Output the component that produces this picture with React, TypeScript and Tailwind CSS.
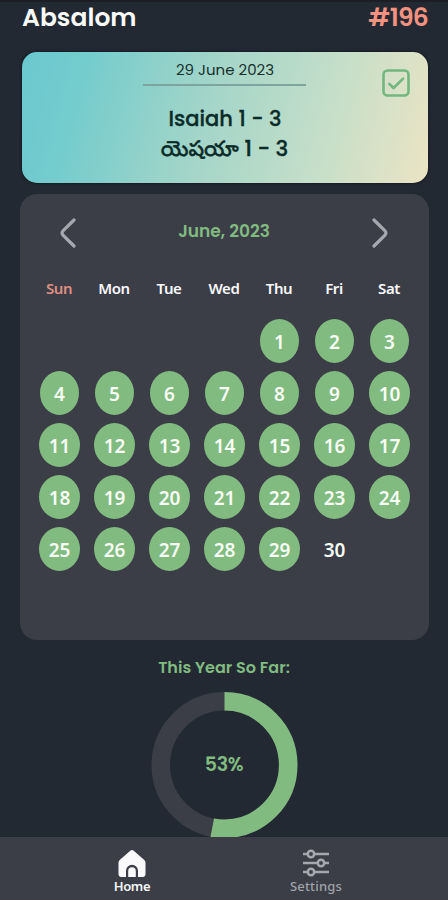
const WEEKDAYS = ["Sun", "Mon", "Tue", "Wed", "Thu", "Fri", "Sat"];
const DAYS_IN_MONTH = 30;
const LAST_READ_DAY = 29;
const PROGRESS = 53;

const display = "font-[Poppins,Inter,'Noto_Sans_Telugu',sans-serif] [font-feature-settings:'cv11']";

function Header() {
  return (
    <header className={`flex h-[52px] items-start justify-between border-t-2 border-[#1d1d26] pl-[22px] pr-[20px] pt-[1px] text-[25px] leading-[30px] font-semibold whitespace-nowrap ${display}`}>
      <h1 className="text-[#fafafa]">Absalom</h1>
      <span className="tracking-[-0.8px] text-[#f5917f]">#196</span>
    </header>
  );
}

function ReadingCard() {
  return (
    <section className={`relative mr-[20px] ml-[22px] flex h-[131px] flex-col items-center rounded-[15px] bg-[linear-gradient(105deg,#6ac8cf_0%,#74cccd_15%,#a3d5c8_45%,#c3dec9_72%,#ebe4c4_100%)] shadow-[0_0_2px_1px_#171c25] ${display}`}>
      <p className="mt-[8px] text-[15px] leading-[20px] text-[#17312f]">29 June 2023</p>
      <div className="mt-[4px] mr-[2px] h-[2px] w-[163px] bg-[#7ea49f]" />
      <p className="mt-[18px] text-[21px] leading-[30px] font-medium whitespace-nowrap text-[#0b2b29] [-webkit-text-stroke:0.3px_#0b2b29]">Isaiah 1 - 3</p>
      <p className="mr-px text-[21.4px] leading-[30px] font-medium whitespace-nowrap text-[#0b2b29] [-webkit-text-stroke:0.4px_#0b2b29]">యెషయా 1 - 3</p>
      <svg className="absolute top-[17px] right-[18px]" width="28" height="28" viewBox="0 0 28 28" fill="none" stroke="#73b780" strokeWidth="2.6" strokeLinecap="round" strokeLinejoin="round">
        <rect x="1.5" y="1.5" width="25" height="25" rx="4" />
        <path d="M7.3 14.8l4.2 4.2 9.6-9.4" />
      </svg>
    </section>
  );
}

function Chevron({ flipped = false }: { flipped?: boolean }) {
  return (
    <svg className={flipped ? "rotate-180" : ""} width="18" height="30" viewBox="0 0 18 30" fill="none" stroke="#a6a8b0" strokeWidth="3.2" strokeLinecap="round" strokeLinejoin="round">
      <path d="M15 2L4.2 12.7q-2.3 2.3 0 4.6L15 28" />
    </svg>
  );
}

function Calendar() {
  const days = Array.from({ length: DAYS_IN_MONTH }, (_, i) => i + 1);
  return (
    <section className="mr-[19px] ml-[20px] mt-[11px] h-[446px] rounded-[17px] bg-[#3b3e47] px-[12px]">
      <div className="flex h-[77px] items-center justify-between pr-[28px] pl-[27px]">
        <Chevron />
        <h2 className={`mb-[3px] text-[17px] leading-[24px] font-semibold whitespace-nowrap text-[#81bb80] ${display}`}>June, 2023</h2>
        <Chevron flipped />
      </div>
      <div className="grid grid-cols-7 font-['Noto_Sans',sans-serif]">
        {WEEKDAYS.map((day, i) => (
          <div key={day} className={`flex h-[44px] items-start justify-center pt-[7px] pr-px text-[15px] leading-[20px] font-semibold tracking-[-0.4px] ${i === 0 ? "text-[#df8f82]" : "text-[#f8f8fc]"}`}>
            {day}
          </div>
        ))}
        {days.map((day) => (
          <div key={day} className={`flex h-[52.1px] items-center justify-center ${day === 1 ? "col-start-5" : ""}`}>
            <span className={`flex h-[44px] items-center justify-center rounded-[50%] pt-[2px] text-[19px] leading-[24px] font-semibold text-[#f7fcf5] ${day < 10 ? "w-[39px]" : "w-[41px]"} ${day <= LAST_READ_DAY ? "bg-[#81bb80]" : ""}`}>
              {day}
            </span>
          </div>
        ))}
      </div>
    </section>
  );
}

function YearProgress() {
  const r = 63.7;
  const length = 2 * Math.PI * r;
  return (
    <section className={`flex h-[197px] flex-col items-center overflow-hidden pt-[17px] ${display}`}>
      <h2 className="text-[16px] leading-[22px] font-semibold whitespace-nowrap text-[#81bb80]">This Year So Far:</h2>
      <div className="mt-[12px] grid shrink-0 place-items-center">
        <svg className="col-start-1 row-start-1" width="148" height="148" viewBox="0 0 148 148" fill="none" strokeWidth="18.6">
          <circle cx="74.5" cy="74" r={r} stroke="#3b3e47" />
          <circle cx="74.5" cy="74" r={r} stroke="#81bb80" strokeDasharray={`${(length * PROGRESS) / 100} ${length}`} transform="rotate(-90 74.5 74)" />
        </svg>
        <span className="col-start-1 row-start-1 text-[19px] font-semibold tracking-[-0.3px] text-[#81bb80]">{PROGRESS}%</span>
      </div>
    </section>
  );
}

function TabBar() {
  return (
    <nav className="grid h-[63px] grid-cols-[184px_184px] justify-center bg-[#3b3e47] font-['Noto_Sans',sans-serif] text-[13px] leading-[16px]">
      <div className="flex flex-col items-center pt-[12px] text-[#f5f5f8]">
        <svg width="30" height="29" viewBox="0 0 30 29">
          <path d="M13.3 1.7q1.7-1.5 3.4 0L27.3 11q1.2 1.1 1.2 2.7V25q0 3-3 3H21v-6.2a6 6 0 0 0-12 0V28H4.5q-3 0-3-3V13.7q0-1.6 1.2-2.7z" fill="#fafafc" />
          <path d="M11.2 28v-6a3.8 3.8 0 0 1 7.6 0v6z" fill="#fafafc" />
        </svg>
        <span className="font-semibold tracking-[-0.3px]">Home</span>
      </div>
      <div className="flex flex-col items-center pt-[12px] text-[#a0a2aa]">
        <svg width="28" height="29" viewBox="0 0 28 29" stroke="#a6a8b0" strokeWidth="2.5" fill="#3b3e47">
          <path d="M1 5h26M1 14h26M1 23h26" />
          <circle cx="9" cy="5" r="3.2" />
          <circle cx="19" cy="14" r="3.2" />
          <circle cx="9" cy="23" r="3.2" />
        </svg>
        <span className="font-medium tracking-[0.2px]">Settings</span>
      </div>
    </nav>
  );
}

export default function App() {
  return (
    <main className="h-[900px] w-[448px] overflow-hidden bg-[#222933]">
      <Header />
      <ReadingCard />
      <Calendar />
      <YearProgress />
      <TabBar />
    </main>
  );
}
